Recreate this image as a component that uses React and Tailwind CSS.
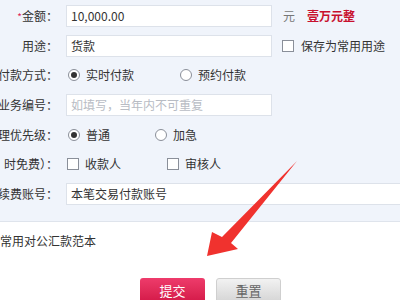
import React from "react";

const Radio = ({ checked }) => (
  <span className="w-[12px] h-[12px] rounded-full border border-[#8a8f99] bg-white flex items-center justify-center shrink-0">
    {checked && <span className="w-[6px] h-[6px] rounded-full bg-[#333]"></span>}
  </span>
);

const Box = () => (
  <span className="block w-[12px] h-[12px] border border-[#8a8f99] bg-white shrink-0"></span>
);

const Row = ({ label, star, children }) => (
  <div className="flex items-center h-[29.7px]">
    <div className="w-[58px] shrink-0 flex justify-end whitespace-nowrap text-[#333]">
      {star && <span className="text-[#e0245a] text-[10px] self-start mt-[2px]">*</span>}
      <span>{label}：</span>
    </div>
    <div className="ml-[8px] flex items-center flex-1 min-w-0">{children}</div>
  </div>
);

export default function App() {
  return (
    <div
      className="w-[400px] h-[300px] overflow-hidden bg-white relative text-[12px] leading-none"
      style={{ fontFamily: '"Noto Sans CJK SC", "Noto Sans", sans-serif' }}
    >
      <div className="bg-[#f0f4fb] pt-[1px] h-[222px] border-b border-[#dfe4ec]">
        <Row label="金额" star>
          <div className="w-[206px] h-[22px] bg-white border border-[#dde2ea] flex items-center pl-[4px] text-[#333]">10,000.00</div>
          <span className="ml-[11px] text-[#777]">元</span>
          <span className="ml-[12px] text-[#c8102e] font-bold">壹万元整</span>
        </Row>
        <Row label="用途">
          <div className="w-[206px] h-[22px] bg-white border border-[#dde2ea] flex items-center pl-[4px] text-[#333]">货款</div>
          <span className="ml-[10px]"><Box /></span>
          <span className="ml-[7px] text-[#333]">保存为常用用途</span>
        </Row>
        <Row label="付款方式">
          <div className="w-[112px] ml-[2px] flex items-center gap-[6px]">
            <Radio checked />
            <span className="text-[#333]">实时付款</span>
          </div>
          <div className="flex items-center gap-[6px]">
            <Radio />
            <span className="text-[#333]">预约付款</span>
          </div>
        </Row>
        <Row label="业务编号">
          <div className="w-[206px] h-[22px] bg-white border border-[#dde2ea] flex items-center pl-[4px] text-[#b8bcc4] whitespace-nowrap overflow-hidden">如填写，当年内不可重复</div>
        </Row>
        <Row label="理优先级">
          <div className="w-[87px] ml-[2px] flex items-center gap-[6px]">
            <Radio checked />
            <span className="text-[#333]">普通</span>
          </div>
          <div className="flex items-center gap-[6px]">
            <Radio />
            <span className="text-[#333]">加急</span>
          </div>
        </Row>
        <Row label="时免费）">
          <div className="w-[100px] ml-[1px] flex items-center gap-[6px]">
            <Box />
            <span className="text-[#333]">收款人</span>
          </div>
          <div className="flex items-center gap-[6px]">
            <Box />
            <span className="text-[#333]">审核人</span>
          </div>
        </Row>
        <Row label="续费账号">
          <div className="w-[340px] shrink-0 h-[22px] bg-white border border-[#dde2ea] flex items-center pl-[4px] text-[#333]">本笔交易付款账号</div>
        </Row>
      </div>

      <div className="mt-[13px] text-[#333] whitespace-nowrap">常用对公汇款范本</div>

      <div className="mt-[31px] flex pl-[140px] gap-[11px]">
        <button className="w-[65px] h-[24px] rounded-t-[3px] bg-gradient-to-b from-[#ee3b6b] to-[#d41848] text-white text-[13px] flex items-center justify-center">提交</button>
        <button className="w-[65px] h-[24px] rounded-t-[3px] bg-gradient-to-b from-[#f2f2f2] to-[#d6d6d6] border border-[#cfcfcf] text-[#666] text-[13px] flex items-center justify-center">重置</button>
      </div>

      <svg className="absolute left-0 top-0 pointer-events-none" width="400" height="300" viewBox="0 0 400 300">
        <polygon
          points="297,161 231,243 238,249 207,256 212,232 222,237"
          fill="#f0322e"
        />
      </svg>
    </div>
  );
}
